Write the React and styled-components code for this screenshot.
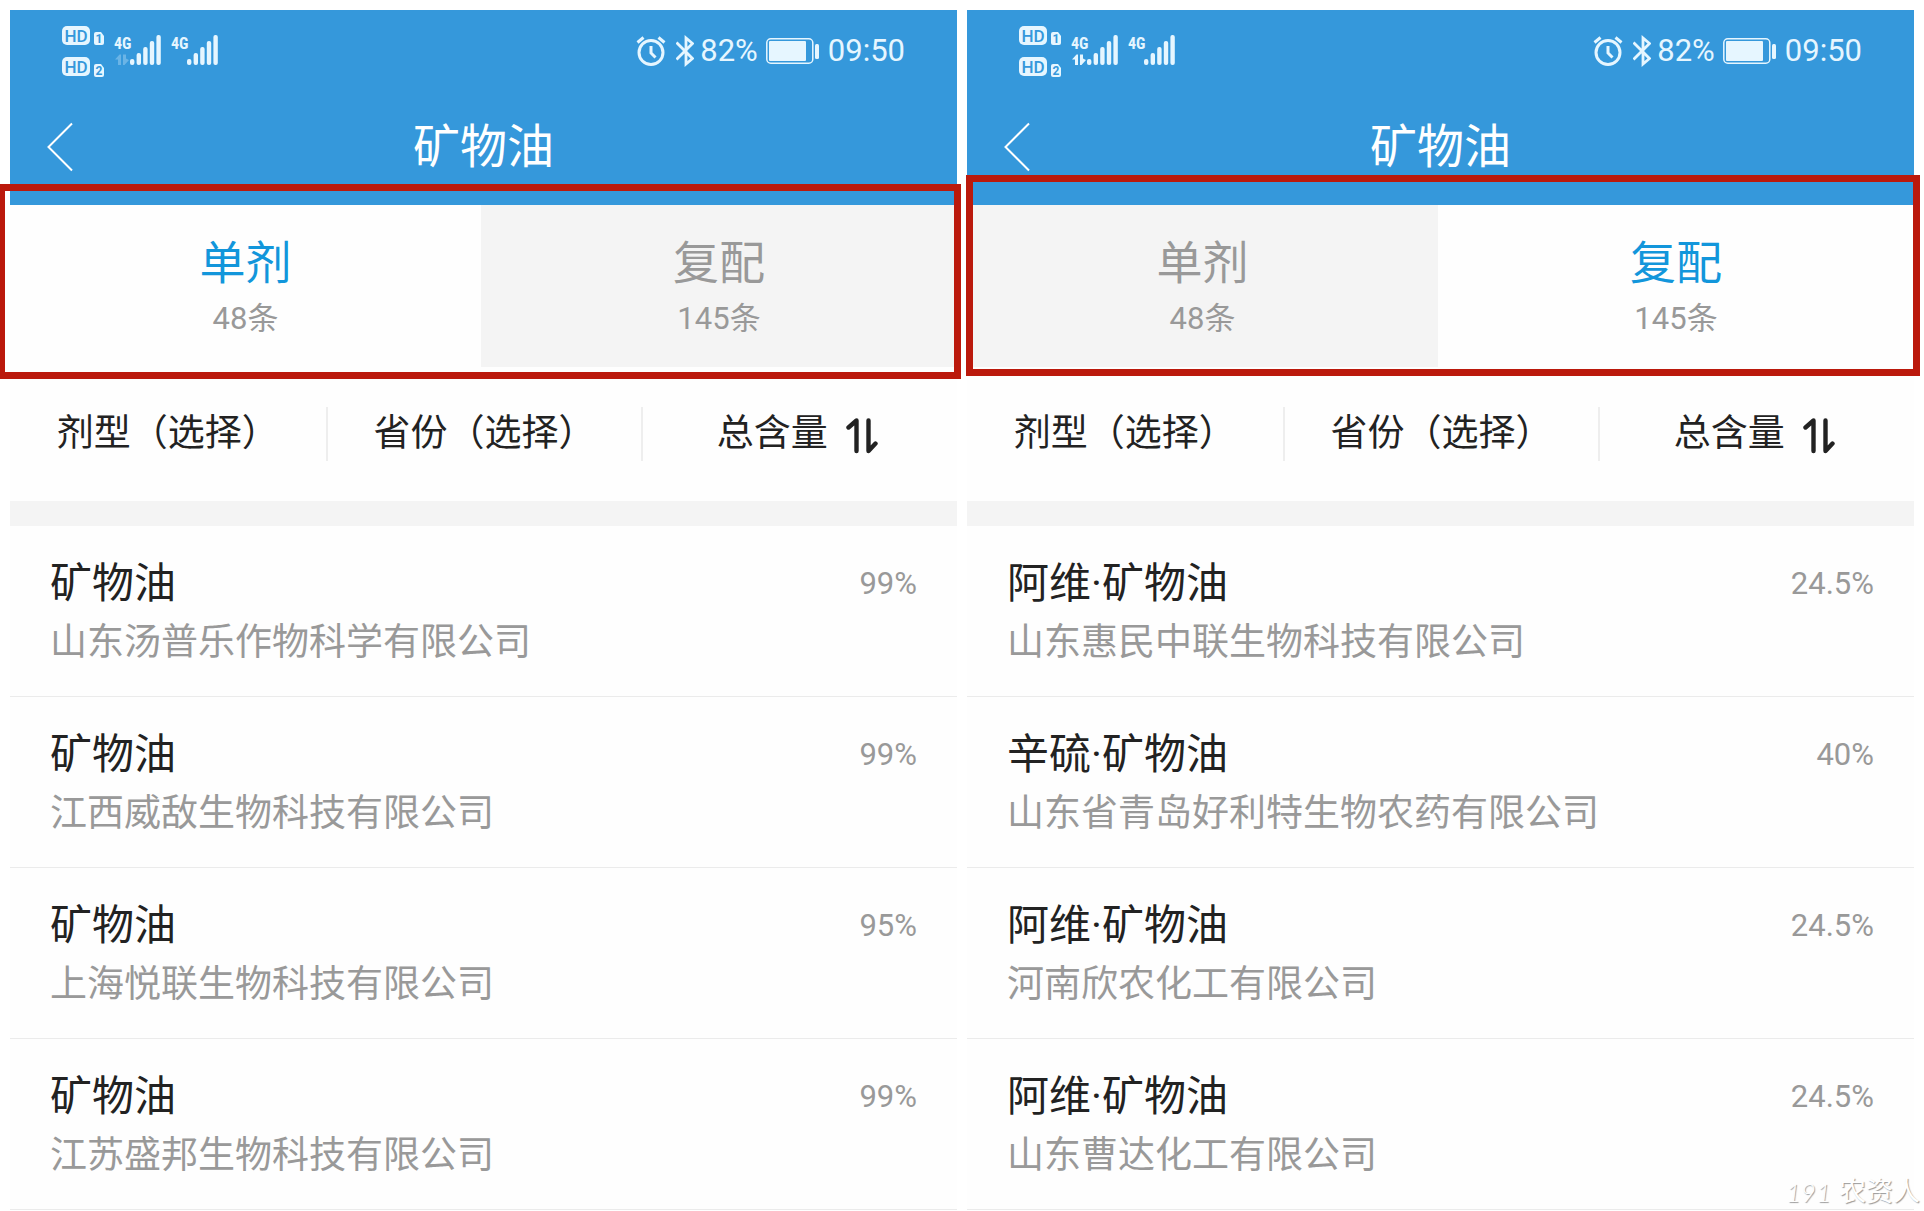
import { useState } from "react";
import styled, { createGlobalStyle } from "styled-components";

const singles = [
  { name: "矿物油", company: "山东汤普乐作物科学有限公司", content: "99%" },
  { name: "矿物油", company: "江西威敌生物科技有限公司", content: "99%" },
  { name: "矿物油", company: "上海悦联生物科技有限公司", content: "95%" },
  { name: "矿物油", company: "江苏盛邦生物科技有限公司", content: "99%" },
];

const mixes = [
  { name: "阿维·矿物油", company: "山东惠民中联生物科技有限公司", content: "24.5%" },
  { name: "辛硫·矿物油", company: "山东省青岛好利特生物农药有限公司", content: "40%" },
  { name: "阿维·矿物油", company: "河南欣农化工有限公司", content: "24.5%" },
  { name: "阿维·矿物油", company: "山东曹达化工有限公司", content: "24.5%" },
];

const tabs = [
  { id: "single", label: "单剂", count: "48条", items: singles },
  { id: "mix", label: "复配", count: "145条", items: mixes },
];

export default function App() {
  return (
    <>
      <GlobalStyle />
      <Page>
        <Phone initialTab="single" dataActive={false} />
        <Phone initialTab="mix" dataActive />
        <Watermark>
          <WatermarkNumber>191</WatermarkNumber>
          <span>农资人</span>
        </Watermark>
      </Page>
    </>
  );
}

function Phone({ initialTab, dataActive }) {
  const [active, setActive] = useState(initialTab);
  const current = tabs.find((tab) => tab.id === active);

  return (
    <Screen>
      <Header>
        <StatusBar>
          <Signals dataActive={dataActive} />
          <StatusRight>
            <AlarmIcon />
            <BluetoothIcon />
            <span>82%</span>
            <BatteryIcon />
            <span>09:50</span>
          </StatusRight>
        </StatusBar>
        <TitleBar>
          <BackBtn aria-label="返回">
            <BackIcon />
          </BackBtn>
          <Title>矿物油</Title>
        </TitleBar>
      </Header>

      <TabsArea>
        <Tabs role="tablist">
          {tabs.map((tab) => (
            <Tab
              key={tab.id}
              role="tab"
              aria-selected={tab.id === active}
              $active={tab.id === active}
              onClick={() => setActive(tab.id)}
            >
              <TabLabel $active={tab.id === active}>{tab.label}</TabLabel>
              <TabCount>{tab.count}</TabCount>
            </Tab>
          ))}
        </Tabs>
        <Highlight $side={initialTab === "single" ? "left" : "right"} />
      </TabsArea>

      <Filters>
        <FilterCell>
          <FilterSelect aria-label="剂型">
            <option>剂型（选择）</option>
          </FilterSelect>
        </FilterCell>
        <FilterCell>
          <FilterSelect aria-label="省份">
            <option>省份（选择）</option>
          </FilterSelect>
        </FilterCell>
        <FilterCell>
          <SortBtn>
            总含量
            <SortIcon />
          </SortBtn>
        </FilterCell>
      </Filters>

      <List>
        {current.items.map((item, index) => (
          <Item key={index}>
            <div>
              <Name>{item.name}</Name>
              <Company>{item.company}</Company>
            </div>
            <Content>{item.content}</Content>
          </Item>
        ))}
      </List>
    </Screen>
  );
}

function Signals({ dataActive }) {
  return (
    <svg width="160" height="56" viewBox="60 22 160 56" fill="#e6f6ff">
      <rect x="62" y="25" width="28" height="19" rx="5" />
      <rect x="62" y="56" width="28" height="19" rx="5" />
      <path d="M94 33q0-2 2-2h5l3 4v7q0 2-2 2h-6q-2 0-2-2z" />
      <path d="M94 65q0-2 2-2h5l3 4v7q0 2-2 2h-6q-2 0-2-2z" />
      <BadgeText x="76" y="41">HD</BadgeText>
      <BadgeText x="76" y="72">HD</BadgeText>
      <SimText x="99" y="42">1</SimText>
      <SimText x="99" y="74">2</SimText>
      <NetText x="114" y="48">4G</NetText>
      <NetText x="171" y="48">4G</NetText>
      <g opacity={dataActive ? 1 : 0.3}>
        <path d="M115 58.500 119.500 53.500H121V64H118V58.500zM123 53.500H126V57.500L129 59 124.500 64H123z" />
      </g>
      <Bars x={130} />
      <Bars x={187} />
    </svg>
  );
}

function Bars({ x }) {
  const heights = [6, 12, 18, 24, 30];
  return heights.map((height, i) => (
    <rect
      key={height}
      x={x + i * 6.6}
      y={64 - height}
      width="4.400"
      height={height}
      rx="2"
    />
  ));
}

function AlarmIcon() {
  return (
    <svg width="34" height="32" viewBox="0 0 34 32" fill="none" stroke="#e6f6ff">
      <circle cx="15" cy="17.500" r="12" strokeWidth="3" />
      <path d="M15 11v7l4.500 4.500" strokeWidth="3" />
      <path d="M1.500 7.500 7.500 2.500M28.500 7.500 22.500 2.500" strokeWidth="3" />
    </svg>
  );
}

function BluetoothIcon() {
  return (
    <svg width="18" height="32" viewBox="1 0 18 32" fill="none" stroke="#e6f6ff" strokeWidth="2.800">
      <path d="M1.500 7.500 17.500 23.500 11 29V3L17.500 8.500 1.500 24.500" />
    </svg>
  );
}

function BatteryIcon() {
  return (
    <svg width="58" height="28" viewBox="-2 0 58 28" fill="#e6f6ff">
      <rect x="0.800" y="1.800" width="46" height="24.400" rx="4" fill="none" stroke="#e6f6ff" strokeWidth="1.500" />
      <rect x="3" y="4" width="37" height="20" rx="1" />
      <rect x="49" y="7" width="4" height="15" rx="1.500" />
    </svg>
  );
}

function BackIcon() {
  return (
    <svg width="26" height="50" viewBox="0 0 26 50" fill="none" stroke="#fff" strokeWidth="2">
      <path d="M25 1.500 1.500 25 25 48.500" />
    </svg>
  );
}

function SortIcon() {
  return (
    <svg
      width="38"
      height="42"
      viewBox="0 -4 38 42"
      fill="none"
      stroke="#222"
      strokeWidth="4.400"
      strokeLinecap="round"
      strokeLinejoin="round"
    >
      <path d="M10.500 34V3.500L2.500 10.500M22.500 3.500V34L29.500 26.500" />
    </svg>
  );
}

const GlobalStyle = createGlobalStyle`
  * {
    box-sizing: border-box;
    margin: 0;
    padding: 0;
  }

  body {
    background: #fff;
    font-family: Roboto, "Noto Sans CJK SC", sans-serif;
    color: #222;
  }

  button,
  select {
    border: none;
    background: none;
    font: inherit;
    color: inherit;
    cursor: pointer;
  }

  svg {
    display: block;
    flex-shrink: 0;
  }
`;

const Page = styled.main`
  position: relative;
  display: grid;
  grid-template-columns: 1fr 1fr;
  gap: 10px;
  padding: 10px 10px 0;
  overflow: hidden;
`;

const Screen = styled.section`
  min-width: 0;
  background: #fefefe;
`;

const Header = styled.header`
  background: #3598db;
  color: #fff;
`;

const StatusBar = styled.div`
  height: 82px;
  padding: 0 52px 0 50px;
  display: flex;
  justify-content: space-between;
  align-items: center;
`;

const StatusRight = styled.div`
  display: flex;
  align-items: center;
  gap: 6px;
  font-size: 31px;
  line-height: 40px;
  color: #e6f6ff;
`;

const BadgeText = styled.text`
  font: 500 17px Roboto, sans-serif;
  text-anchor: middle;
  fill: #3598db;
`;

const SimText = styled.text`
  font: bold 12px Roboto, sans-serif;
  text-anchor: middle;
  fill: #3598db;
`;

const NetText = styled.text`
  font: bold 16px "Liberation Sans Narrow", "Roboto Condensed", Roboto, sans-serif;
`;

const TitleBar = styled.div`
  height: 113px;
  padding: 0 37px 4px;
  display: grid;
  grid-template-columns: 1fr auto 1fr;
  align-items: center;
`;

const BackBtn = styled.button`
  justify-self: start;
`;

const Title = styled.h1`
  font-size: 47px;
  font-weight: 400;
  line-height: 60px;
`;

const TabsArea = styled.div`
  position: relative;
`;

const Tabs = styled.div`
  display: grid;
  grid-template-columns: 471fr 476fr;
`;

const Tab = styled.button`
  height: 162px;
  padding-bottom: 22px;
  display: flex;
  flex-direction: column;
  justify-content: flex-end;
  align-items: center;
  background: ${(props) => (props.$active ? "#fefefe" : "#f4f4f4")};
`;

const TabLabel = styled.span`
  font-size: 46px;
  line-height: 60px;
  color: ${(props) => (props.$active ? "#1296db" : "#999")};
`;

const TabCount = styled.span`
  font-size: 31px;
  line-height: 52px;
  color: #999;
`;

// red frame drawn over the tabs and the lower edge of the header
const Highlight = styled.div`
  position: absolute;
  top: ${(props) => (props.$side === "left" ? "-21px" : "-30px")};
  bottom: ${(props) => (props.$side === "left" ? "-12px" : "-9px")};
  left: ${(props) => (props.$side === "left" ? "-12px" : "-1px")};
  right: ${(props) => (props.$side === "left" ? "-4px" : "-6px")};
  border: 7px solid #bb190c;
  pointer-events: none;
`;

const Filters = styled.div`
  padding: 40px 0;
  display: grid;
  grid-template-columns: repeat(3, 1fr);
  border-bottom: 25px solid #f4f4f4;
`;

const FilterCell = styled.div`
  height: 54px;
  display: flex;
  justify-content: center;
  align-items: center;
  font-size: 37px;
  line-height: 52px;

  & + & {
    border-left: 2px solid #eee;
  }
`;

const FilterSelect = styled.select`
  appearance: none;
  line-height: 52px;
`;

const SortBtn = styled.button`
  display: flex;
  align-items: center;
  gap: 18px;
`;

const List = styled.ul`
  list-style: none;
`;

const Item = styled.li`
  padding: 28px 40px 24px;
  display: flex;
  justify-content: space-between;
  align-items: flex-start;
  border-bottom: 1px solid #ebebeb;
`;

const Name = styled.h2`
  font-size: 42px;
  font-weight: 400;
  line-height: 60px;
`;

const Company = styled.p`
  font-size: 37px;
  line-height: 58px;
  color: #999;
`;

const Content = styled.span`
  font-size: 31px;
  line-height: 60px;
  color: #999;
`;

const Watermark = styled.div`
  position: absolute;
  right: 4px;
  bottom: 0;
  display: flex;
  align-items: center;
  gap: 8px;
  font-size: 27px;
  line-height: 36px;
  color: #fff;
  text-shadow: 1px 1px 1px #999;
`;

const WatermarkNumber = styled.span`
  font: italic 300 26px/36px Lato, sans-serif;
`;
